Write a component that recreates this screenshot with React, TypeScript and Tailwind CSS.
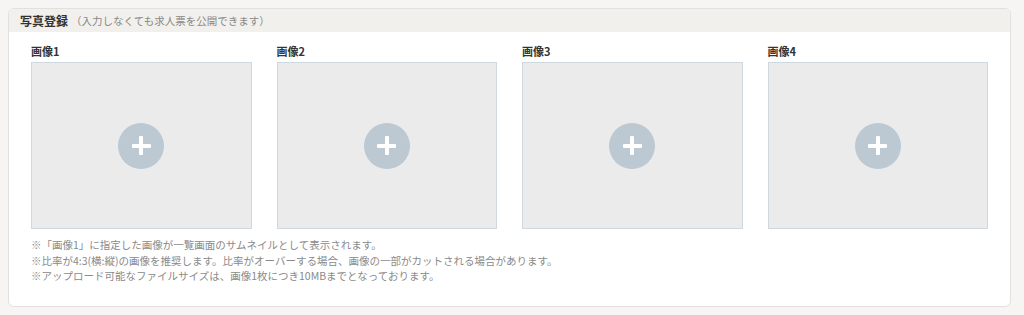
const font = { fontFamily: '"Noto Sans CJK JP", "Noto Sans", sans-serif' };

function PhotoSlot({ label }: { label: string }) {
  return (
    <div className="flex flex-col">
      <div className="mb-[4px] text-[11px] font-bold leading-[14px] text-[#333]">{label}</div>
      <button
        type="button"
        className="flex h-[167px] items-center justify-center border border-[#cfd8df] bg-[#ebebeb]"
      >
        <span className="relative flex h-[46px] w-[46px] items-center justify-center rounded-full bg-[#bcc8d2]">
          <span className="absolute h-[4px] w-[19px] rounded-[1px] bg-white" />
          <span className="absolute h-[19px] w-[4px] rounded-[1px] bg-white" />
        </span>
      </button>
    </div>
  );
}

export default function App() {
  const slots = ['画像1', '画像2', '画像3', '画像4'];

  return (
    <div className="h-[315px] w-full bg-[#f6f5f3] pt-[8px] pl-[8px] pr-[13px]" style={font}>
      <div className="h-[299px] overflow-hidden rounded-[6px] border border-[#e0e0e0] bg-white">
        <div className="flex h-[23px] items-center bg-[#f1f0ec] pl-[11px]">
          <span className="text-[12px] font-bold text-[#333]">写真登録</span>
          <span className="ml-[3px] text-[10.5px] text-[#888]">（入力しなくても求人票を公開できます）</span>
        </div>

        <div className="px-[22px] pt-[12px]">
          <div className="grid grid-cols-4 gap-[25px]">
            {slots.map((s) => (
              <PhotoSlot key={s} label={s} />
            ))}
          </div>

          <div className="mt-[8px] text-[10.5px] leading-[15.5px] text-[#8a8a8a]">
            <p>※「画像1」に指定した画像が一覧画面のサムネイルとして表示されます。</p>
            <p>※比率が4:3(横:縦)の画像を推奨します。比率がオーバーする場合、画像の一部がカットされる場合があります。</p>
            <p>※アップロード可能なファイルサイズは、画像1枚につき10MBまでとなっております。</p>
          </div>
        </div>
      </div>
    </div>
  );
}
